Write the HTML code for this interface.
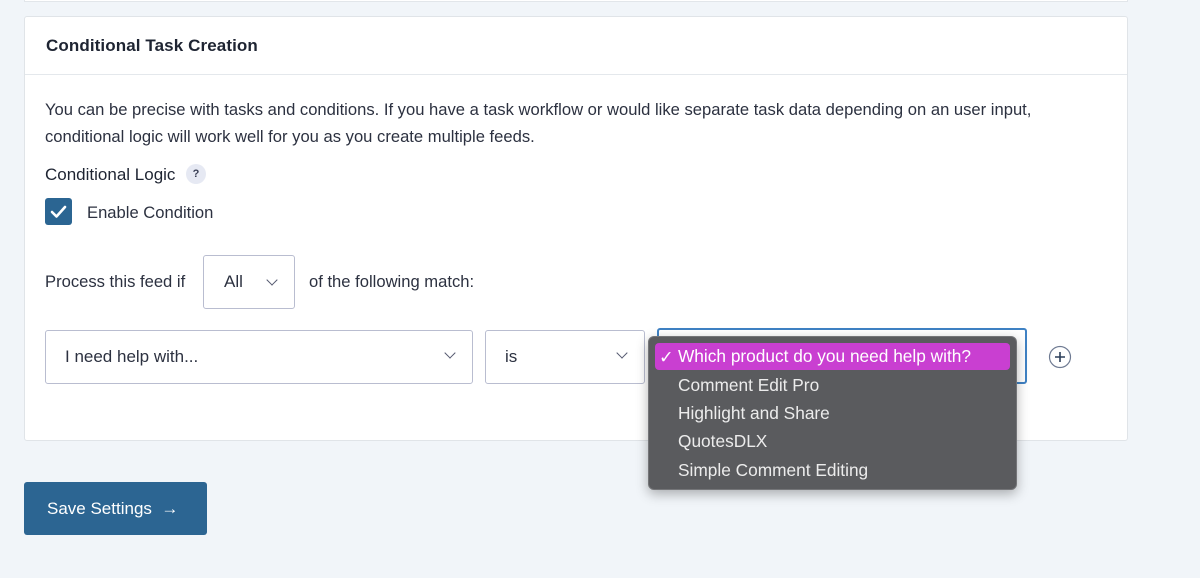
<!DOCTYPE html>
<html><head><meta charset="utf-8"><style>
*{box-sizing:border-box;margin:0;padding:0}
body{width:1200px;height:578px;background:#f1f5f9;font-family:"Liberation Sans",sans-serif;color:#1e2432;position:relative;overflow:hidden}
.top{position:absolute;left:24px;top:-4px;width:1104px;height:6px;background:#fff;border:1px solid #e2e6ea}
.card{position:absolute;left:24px;top:16px;width:1104px;height:425px;background:#fff;border:1px solid #e0e4e8;border-radius:3px}
.hd{height:58px;border-bottom:1px solid #e4e8ec;padding:19px 0 0 21px;font-size:17px;font-weight:bold;color:#1e2432;letter-spacing:0.1px}
.t{position:absolute;font-size:16.6px;color:#2c3140;white-space:nowrap}
.sel{position:absolute;border:1px solid #b9bdd0;border-radius:3px;background:#fff;font-size:17px;color:#2c3140}
.sel span{position:absolute;top:16px}
.chev{position:absolute;top:18px;width:8px;height:8px;border-right:1.5px solid #555a70;border-bottom:1.5px solid #555a70;transform:rotate(45deg)}
.cb{position:absolute;left:45px;top:198px;width:27px;height:27px;background:#2b6592;border-radius:3px}
.q{position:absolute;left:186px;top:164px;width:20px;height:20px;border-radius:50%;background:#e6e9f3;font-size:11px;font-weight:bold;text-align:center;line-height:20px;color:#3a3f55}
.btn{position:absolute;left:24px;top:482px;width:183px;height:53px;background:#2c6592;border-radius:3px;color:#fff;font-size:17px;padding:17px 0 0 23px}
.dd{position:absolute;left:648px;top:336px;width:369px;height:154px;background:#5a5b5e;border:1px solid #747578;border-radius:6px;box-shadow:0 4px 12px rgba(0,0,0,.3)}
.it{position:absolute;left:29px;font-size:17.3px;color:#ececec;white-space:nowrap}
.hl{position:absolute;left:6px;top:6px;width:355px;height:27px;background:#c93fd1;border-radius:4px}
</style></head><body>
<div class="top"></div>
<div class="card"><div class="hd">Conditional Task Creation</div></div>
<div class="t" style="left:45px;top:100px">You can be precise with tasks and conditions. If you have a task workflow or would like separate task data depending on an user input,</div>
<div class="t" style="left:45px;top:127px">conditional logic will work well for you as you create multiple feeds.</div>
<div class="t" style="left:45px;top:165px;font-size:17px;color:#1e2432">Conditional Logic</div>
<div class="q">?</div>
<div class="cb"><svg width="27" height="27" viewBox="0 0 27 27"><path d="M7 14l4.5 4.5L20 9" fill="none" stroke="#fff" stroke-width="2.6" stroke-linecap="round" stroke-linejoin="round"/></svg></div>
<div class="t" style="left:87px;top:203px">Enable Condition</div>
<div class="t" style="left:45px;top:272px">Process this feed if</div>
<div class="sel" style="left:203px;top:255px;width:92px;height:54px"><span style="left:20px">All</span><div class="chev" style="left:64px;top:20px"></div></div>
<div class="t" style="left:309px;top:272px">of the following match:</div>
<div class="sel" style="left:45px;top:330px;width:428px;height:54px"><span style="left:19px">I need help with...</span><div class="chev" style="left:400px"></div></div>
<div class="sel" style="left:485px;top:330px;width:160px;height:54px"><span style="left:19px">is</span><div class="chev" style="left:132px"></div></div>
<div class="sel" style="left:657px;top:328px;width:370px;height:56px;border:2px solid #3f82c4"></div>
<svg style="position:absolute;left:1048px;top:345px" width="24" height="24" viewBox="0 0 24 24"><circle cx="12" cy="12" r="10.5" fill="none" stroke="#6e7a92" stroke-width="1.2"/><path d="M12 7v10M7 12h10" stroke="#2c3f5a" stroke-width="1.6"/></svg>
<div class="dd">
<div class="hl"></div>
<div class="it" style="left:10px;top:10px;color:#fff">✓</div>
<div class="it" style="top:9px;color:#fff">Which product do you need help with?</div>
<div class="it" style="top:38px">Comment Edit Pro</div>
<div class="it" style="top:66px">Highlight and Share</div>
<div class="it" style="top:94px">QuotesDLX</div>
<div class="it" style="top:123px">Simple Comment Editing</div>
</div>
<div class="btn">Save Settings &nbsp;→</div>
</body></html>
